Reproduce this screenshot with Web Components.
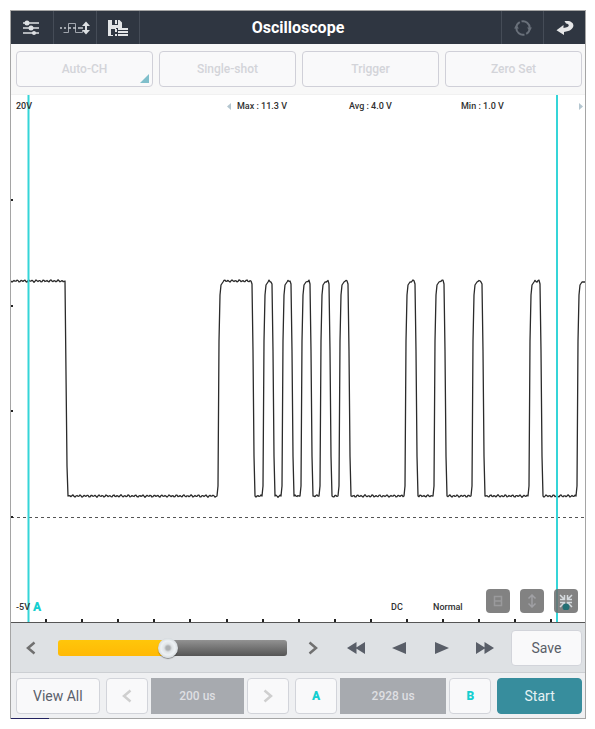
<!DOCTYPE html>
<html lang="en">
<head>
<meta charset="utf-8">
<meta name="viewport" content="width=device-width, initial-scale=1">
<title>Oscilloscope</title>
<style>
body {
    margin: 0;
    background: #ffffff;
    font-family: Roboto, "Liberation Sans", sans-serif;
}
</style>
</head>
<body>
<osc-app></osc-app>

<script>
function define(name, html, setup) {
    const template = document.createElement('template');
    template.innerHTML = html;

    window.customElements.define(name, class extends HTMLElement {
        constructor() {
            super();
            this.attachShadow({ mode: 'open' }).append(template.content.cloneNode(true));
        }

        connectedCallback() {
            if (setup) setup(this, this.shadowRoot);
        }
    });
}

// name: [width, height, markup]
const icons = {
    sliders: [20, 16, `
        <g fill="#dde0e3">
            <path d="M1 2h16v2H1zM1 7h16v2H1zM1 12h16v2H1z" opacity=".75"/>
            <circle cx="5" cy="3" r="2.5"/><circle cx="9" cy="8" r="2.5"/><circle cx="12" cy="13" r="2"/>
        </g>`],
    wave: [30, 16, `
        <g fill="none" stroke="#a0a5ad">
            <path d="M3.500 12.500h5v-9h7v9h7v-2" stroke-width="1"/>
            <path d="M0 8h2M4 8h2M8 8h3M13 8h3M18 8h5" stroke="#c6cacf" stroke-width="1.500"/>
        </g>
        <path d="M26 1.500l4 4.500h-3v4h3l-4 4.500-4-4.500h3V6h-3z" fill="#dde0e3"/>`],
    save: [22, 18, `
        <path d="M1 1h11.500L15 3.500V9H9v1H4v7H1z" fill="#e3e5e7"/>
        <path d="M5 1h6v5H5z" fill="#303742"/>
        <path d="M8 1h2v4H8zM1 16h5v1H1zM8 10h2v3H8zM8 15h2v2H8zM11 9h10v2H11zM11 12h10v2H11zM11 15h10v2H11z" fill="#e3e5e7"/>
        <path d="M4 10h3v6H4z" fill="#303742"/>`],
    refresh: [18, 18, `
        <g fill="none" stroke="#69707a" stroke-width="2">
            <path d="M2.300 9a6.700 6.700 0 0 1 3.500-5.900M7.500 2.400a6.700 6.700 0 0 1 8.200 6.600M15.700 9a6.700 6.700 0 0 1-3.500 5.900M10.500 15.600a6.700 6.700 0 0 1-8.200-6.600"/>
        </g>
        <path d="M0 9.500L2.300 6 5 9.500zM13 8.500h5L15.700 12z" fill="#69707a"/>`],
    back: [18, 16, `
        <path d="M8.500 1H11c9 0 9 10-3 11v3L.5 10.300 7.500 5v3c6-.2 7-4 2.500-4.500z" fill="#e6e7e8"/>`],
    'chevron-left': [10, 14, '<path d="M8.500 1.500L2 7l6.500 5.500" fill="none" stroke="currentColor" stroke-width="2.500"/>'],
    'chevron-right': [10, 14, '<path d="M1.500 1.500L8 7l-6.500 5.500" fill="none" stroke="currentColor" stroke-width="2.500"/>'],
    rewind: [18, 12, '<path d="M9.500 0v12L0 6zM18 0v12L8.500 6z" fill="currentColor"/>'],
    previous: [14, 12, '<path d="M14 0v12L0 6z" fill="currentColor"/>'],
    next: [14, 12, '<path d="M0 0v12l14-6z" fill="currentColor"/>'],
    forward: [18, 12, '<path d="M0 0v12l9.500-6zM8.500 0v12L18 6z" fill="currentColor"/>'],
    split: [10, 12, '<path d="M1.500 1.500h7v9h-7zM1.500 6h7" fill="none" stroke="#9a9a9c" stroke-width="1.500"/>'],
    vertical: [10, 14, '<path d="M5 1.500v11M1.500 4.500L5 1l3.500 3.500M1.500 9.500L5 13l3.500-3.500" fill="none" stroke="#a0a0a4" stroke-width="1.500"/>'],
    shrink: [14, 18, `
        <path d="M1 3l3.500 3.500M13 3L9.500 6.500M1 15l3.500-3.500M13 15l-3.500-3.500M5.500 3v4.500H1M8.500 3v4.500H13M5.500 15v-4.500H1M8.500 15v-4.500H13" fill="none" stroke="#d5dade" stroke-width="1.500"/>
        <circle cx="7" cy="15" r="3.500" fill="#246f74"/>`],
    'tiny-left': [4, 7, '<path d="M4 0v7L0 3.500z" fill="#b4c6d0"/>'],
    'tiny-right': [4, 7, '<path d="M0 0v7l4-3.500z" fill="#b4c6d0"/>']
};

define('osc-icon', `
<style>
:host {
    display: inline-flex;
    flex: none;
}
</style>
`, (host, root) => {
    const [width, height, markup] = icons[host.getAttribute('name')];
    root.innerHTML += `<svg width="${width}" height="${height}" viewBox="0 0 ${width} ${height}" aria-hidden="true">${markup}</svg>`;
});

define('osc-button', `
<style>
:host {
    display: grid;
    min-width: 0;
    color: #59606b;
    font-size: 14px;
}

button {
    position: relative;
    display: flex;
    align-items: center;
    justify-content: center;
    min-width: 0;
    margin: 0;
    padding: 0;
    box-sizing: border-box;
    border: 1px solid #d2d4da;
    border-radius: 4px;
    background: #f9f9fa;
    color: inherit;
    font: inherit;
    cursor: pointer;
}

button:disabled {
    cursor: default;
}

:host([variant="mode"]) {
    color: #d3d4d9;
    font-size: 12px;
    font-weight: 500;
}

:host([variant="mode"]) button {
    border-color: #d0d0d8;
}

:host([variant="primary"]) {
    color: #e6f2f4;
}

:host([variant="primary"]) button {
    border-color: #378d9d;
    background: #378d9d;
}

:host([variant="marker"]) {
    color: #16cfd0;
    font-size: 12px;
    font-weight: 900;
}

:host([variant="step"]) {
    color: #cfcfcf;
}

:host([variant="flat"]) button {
    border: none;
    background: none;
}

:host([variant="tool"]) button {
    border: none;
    background: rgba(108, 108, 108, 0.85);
}

/* corner mark: the button opens a list */
:host([menu]) button::after {
    content: "";
    position: absolute;
    right: 3px;
    bottom: 3px;
    border-left: 9px solid transparent;
    border-bottom: 9px solid #80bfcb;
}
</style>
<button type="button"><slot></slot></button>
`, (host, root) => {
    const button = root.querySelector('button');
    button.disabled = host.hasAttribute('disabled');
    if (host.hasAttribute('label')) button.setAttribute('aria-label', host.getAttribute('label'));
});

define('osc-header', `
<style>
:host {
    display: grid;
    grid-template-columns: 1fr auto 1fr;
    height: 33px;
    background: #2f3641;
    color: #ffffff;
}

h1 {
    margin: 0;
    font-size: 16px;
    line-height: 34px;
    font-weight: 700;
}

nav {
    display: flex;
}

nav:last-child {
    justify-content: flex-end;
}

osc-button {
    width: 42px;
    border-right: 1px solid #454c57;
}

nav:last-child osc-button {
    width: 41px;
    border-left: 1px solid #454c57;
    border-right: none;
}
</style>
<nav>
    <osc-button variant="flat" label="Settings"><osc-icon name="sliders"></osc-icon></osc-button>
    <osc-button variant="flat" label="Signal scale"><osc-icon name="wave"></osc-icon></osc-button>
    <osc-button variant="flat" label="Saved data"><osc-icon name="save"></osc-icon></osc-button>
</nav>
<h1>Oscilloscope</h1>
<nav>
    <osc-button variant="flat" label="Refresh" disabled><osc-icon name="refresh"></osc-icon></osc-button>
    <osc-button variant="flat" label="Back"><osc-icon name="back"></osc-icon></osc-button>
</nav>
`);

define('osc-modes', `
<style>
:host {
    display: grid;
    grid-template-columns: repeat(4, 1fr);
    gap: 6px;
    height: 51px;
    padding: 7px 3px 7px 5px;
    box-sizing: border-box;
    border-bottom: 1px solid #f1f1f1;
    background: #f8f8f8;
}
</style>
<osc-button variant="mode" menu disabled>Auto-CH</osc-button>
<osc-button variant="mode" disabled>Single-shot</osc-button>
<osc-button variant="mode" disabled>Trigger</osc-button>
<osc-button variant="mode" disabled>Zero Set</osc-button>
`);

define('osc-plot', `
<style>
:host {
    position: relative;
    display: flex;
    flex-direction: column;
    justify-content: space-between;
    min-height: 300px;
    box-sizing: border-box;
    border-bottom: 1px solid #555555;
    background: #ffffff;
    color: #303030;
    font-size: 9px;
    line-height: 12px;
    font-weight: 500;
}

svg {
    position: absolute;
    inset: 0;
    width: 100%;
    height: 100%;
}

path {
    fill: none;
    vector-effect: non-scaling-stroke;
}

.row {
    position: relative;
    display: grid;
    align-items: center;
    padding: 5px 2px 0 5px;
}

.top {
    grid-template-columns: 211px 10px 112px 112px 1fr auto;
}

.bottom {
    grid-template-columns: 17px 1fr 42px 53px auto;
    padding: 0 7px 9px 5px;
}

.bottom span {
    padding-top: 12px;
}

.bottom .marker {
    color: #16cfd0;
    font-size: 12px;
    font-weight: 900;
}

.tools {
    display: grid;
    grid-template-columns: repeat(3, 24px);
    grid-auto-rows: 24px;
    gap: 10px;
}
</style>
<svg viewBox="0 0 574 527" preserveAspectRatio="none" role="img" aria-label="Channel voltage over time">
    <path class="zero" d="M0 422.500H574" stroke="#555555" stroke-dasharray="3 3"/>
    <path class="ticks" stroke="#222222" stroke-width="2"/>
    <path class="wave" stroke="#2b2b2b" stroke-width="1.300" stroke-linejoin="round"/>
    <path d="M17.500 0V527M546 0V527" stroke="#35d5d8" stroke-width="2"/>
</svg>
<div class="row top">
    <span>20V</span>
    <osc-icon name="tiny-left"></osc-icon>
    <span>Max : 11.3 V</span>
    <span>Avg : 4.0 V</span>
    <span>Min : 1.0 V</span>
    <osc-icon name="tiny-right"></osc-icon>
</div>
<div class="row bottom">
    <span>-5V</span>
    <span class="marker">A</span>
    <span>DC</span>
    <span>Normal</span>
    <div class="tools">
        <osc-button variant="tool" label="Split view" disabled><osc-icon name="split"></osc-icon></osc-button>
        <osc-button variant="tool" label="Move vertically" disabled><osc-icon name="vertical"></osc-icon></osc-button>
        <osc-button variant="tool" label="Shrink"><osc-icon name="shrink"></osc-icon></osc-button>
    </div>
</div>
`, (host, root) => {
    const HIGH = 186;
    const LOW = 401;

    // start of the rise, end of the fall
    const pulses = [
        [206, 244], [251, 263], [270, 282], [289, 301], [308, 320],
        [327, 339], [393, 406], [422, 435], [460, 473], [517, 531]
    ];

    function ripple(from, to, level) {
        let d = '';
        for (let x = from; x <= to; x += 1) {
            const noise = Math.sin(x * 1.7) * 0.8 + Math.sin(x * 0.9) * 0.4;
            d += `L${x} ${(level + noise).toFixed(1)}`;
        }
        return d;
    }

    function rise(x) {
        return `L${x} ${LOW}L${x + 1} ${LOW - 10}L${x + 2} ${HIGH + 60}L${x + 3} ${HIGH + 14}L${x + 4} ${HIGH + 4}L${x + 6} ${HIGH + 1}`;
    }

    function fall(x) {
        return `L${x - 3} ${HIGH + 3}L${x - 2} ${HIGH + 70}L${x - 1} ${LOW - 40}L${x} ${LOW}`;
    }

    let d = `M0 ${HIGH}${ripple(0, 53, HIGH)}L54 ${HIGH}L56 ${LOW - 30}L57 ${LOW}`;
    let x = 58;
    pulses.forEach(([start, end]) => {
        // the short pulses span about 4px more at the foot than at the crest
        const foot = end - start > 20 ? end : end + 1;
        d += ripple(x, start - 1, LOW) + rise(start) + ripple(start + 7, foot - 4, HIGH) + fall(foot);
        x = foot + 1;
    });
    d += ripple(x, 564, LOW) + rise(565) + `L574 ${HIGH + 1}`;
    root.querySelector('.wave').setAttribute('d', d);

    let ticks = '';
    for (let i = 0; i < 15; i++) {
        ticks += `M${35 + Math.round(i * 36.1)} 524V527`;
    }
    [105, 211, 316, 422].forEach(y => {
        ticks += `M0 ${y}H2`;
    });
    root.querySelector('.ticks').setAttribute('d', ticks);
});

define('osc-seek', `
<style>
:host {
    display: grid;
    grid-template-columns: 39px 1fr repeat(5, 43px) 76px;
    align-items: center;
    height: 50px;
    padding-right: 3px;
    box-sizing: border-box;
    border-bottom: 1px solid #cccfd3;
    background: #dee1e4;
}

osc-button {
    height: 36px;
    color: #595e68;
}

osc-button[label^="Step"] {
    color: #707070;
}

osc-button:last-child {
    margin-left: 5px;
}

input {
    --fill: 48%;
    appearance: none;
    min-width: 0;
    height: 20px;
    margin: 0 4px 0 8px;
    background: none;
}

input::-webkit-slider-runnable-track {
    height: 16px;
    border-radius: 3px;
    background:
        linear-gradient(#ffc60a, #ffb905) 0 0 / var(--fill) 100% no-repeat,
        linear-gradient(#929292, #555555);
}

input::-webkit-slider-thumb {
    appearance: none;
    width: 20px;
    height: 20px;
    margin-top: -2px;
    border-radius: 50%;
    background: radial-gradient(circle closest-side, #adb0b2 0 2px, #dfe3e6 4px, #edf1f4 7px, #d5dade 10px);
    box-shadow: 0 1px 1px rgba(0, 0, 0, 0.4);
}
</style>
<osc-button variant="flat" label="Step back"><osc-icon name="chevron-left"></osc-icon></osc-button>
<input type="range" min="0" max="100" value="48" aria-label="Position">
<osc-button variant="flat" label="Step forward"><osc-icon name="chevron-right"></osc-icon></osc-button>
<osc-button variant="flat" label="Rewind"><osc-icon name="rewind"></osc-icon></osc-button>
<osc-button variant="flat" label="Previous"><osc-icon name="previous"></osc-icon></osc-button>
<osc-button variant="flat" label="Next"><osc-icon name="next"></osc-icon></osc-button>
<osc-button variant="flat" label="Fast forward"><osc-icon name="forward"></osc-icon></osc-button>
<osc-button>Save</osc-button>
`, (host, root) => {
    const input = root.querySelector('input');
    input.addEventListener('input', () => {
        input.style.setProperty('--fill', input.value + '%');
    });
});

// a read-only value with a button slotted on each side
define('osc-stepper', `
<style>
:host {
    display: grid;
    grid-template-columns: 42px 1fr 42px;
    gap: 3px;
    min-width: 0;
}

output {
    display: grid;
    place-items: center;
    background: #a7aaaf;
    color: #dedfe2;
    font-size: 12px;
    font-weight: 500;
}
</style>
<slot name="before"></slot>
<output><slot></slot></output>
<slot name="after"></slot>
`);

define('osc-controls', `
<style>
:host {
    display: grid;
    grid-template-columns: 84fr 184fr 197fr 85fr;
    gap: 6px;
    height: 45px;
    padding: 5px 3px 4px 5px;
    box-sizing: border-box;
    background: #eff0f2;
}
</style>
<osc-button>View All</osc-button>
<osc-stepper>
    <osc-button slot="before" variant="step" label="Shorter time base" disabled><osc-icon name="chevron-left"></osc-icon></osc-button>
    200 us
    <osc-button slot="after" variant="step" label="Longer time base" disabled><osc-icon name="chevron-right"></osc-icon></osc-button>
</osc-stepper>
<osc-stepper>
    <osc-button slot="before" variant="marker">A</osc-button>
    2928 us
    <osc-button slot="after" variant="marker">B</osc-button>
</osc-stepper>
<osc-button variant="primary">Start</osc-button>
`);

define('osc-app', `
<style>
:host {
    display: block;
    box-sizing: border-box;
    min-height: 100vh;
    padding: 10px 9px 10px 10px;
}

main {
    position: relative;
    display: flex;
    flex-direction: column;
    min-height: calc(100vh - 20px);
    box-sizing: border-box;
    border: 1px solid #a5a5a5;
}

osc-plot {
    flex: 1;
}

.progress {
    position: absolute;
    left: 0;
    bottom: -1px;
    width: 38px;
    height: 1px;
    background: #22225f;
}
</style>
<main>
    <osc-header></osc-header>
    <osc-modes></osc-modes>
    <osc-plot></osc-plot>
    <osc-seek></osc-seek>
    <osc-controls></osc-controls>
    <div class="progress"></div>
</main>
`);
</script>
</body>
</html>
